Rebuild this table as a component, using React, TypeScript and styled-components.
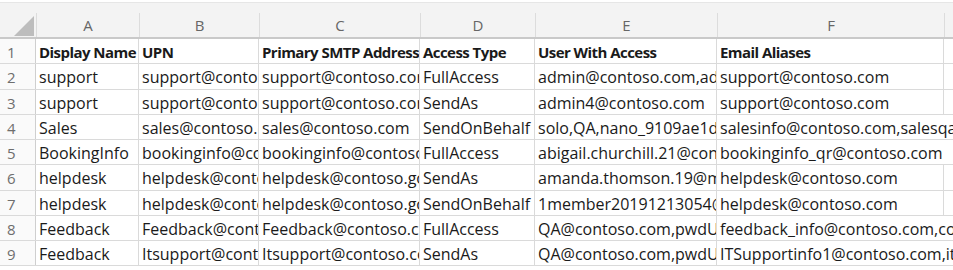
import React from "react";
import styled, { createGlobalStyle } from "styled-components";

const columns = ["A", "B", "C", "D", "E", "F", "G"];
const template = "36px 103px 120px 161px 115px 182px 227px 100px";

type Row = {
  cells: string[];
  spill?: boolean;
};

const rows: Row[] = [
  {
    cells: [
      "Display Name",
      "UPN",
      "Primary SMTP Address",
      "Access Type",
      "User With Access",
      "Email Aliases",
    ],
  },
  {
    cells: [
      "support",
      "support@contoso.com",
      "support@contoso.com",
      "FullAccess",
      "admin@contoso.com,admin2@contoso.com",
      "support@contoso.com",
    ],
  },
  {
    cells: [
      "support",
      "support@contoso.com",
      "support@contoso.com",
      "SendAs",
      "admin4@contoso.com",
      "support@contoso.com",
    ],
  },
  {
    cells: [
      "Sales",
      "sales@contoso.com",
      "sales@contoso.com",
      "SendOnBehalf",
      "solo,QA,nano_9109ae1d@contoso.com",
      "salesinfo@contoso.com,salesqa@contoso.com",
    ],
    spill: true,
  },
  {
    cells: [
      "BookingInfo",
      "bookinginfo@contoso.com",
      "bookinginfo@contoso.com",
      "FullAccess",
      "abigail.churchill.21@contoso.com",
      "bookinginfo_qr@contoso.com",
    ],
    spill: true,
  },
  {
    cells: [
      "helpdesk",
      "helpdesk@contoso.com",
      "helpdesk@contoso.gov",
      "SendAs",
      "amanda.thomson.19@mail.contoso.com",
      "helpdesk@contoso.com",
    ],
  },
  {
    cells: [
      "helpdesk",
      "helpdesk@contoso.com",
      "helpdesk@contoso.gov",
      "SendOnBehalf",
      "1member20191213054@contoso.com",
      "helpdesk@contoso.com",
    ],
  },
  {
    cells: [
      "Feedback",
      "Feedback@contoso.com",
      "Feedback@contoso.com",
      "FullAccess",
      "QA@contoso.com,pwdUser@contoso.com",
      "feedback_info@contoso.com,contact@contoso.com",
    ],
    spill: true,
  },
  {
    cells: [
      "Feedback",
      "Itsupport@contoso.com",
      "Itsupport@contoso.com",
      "SendAs",
      "QA@contoso.com,pwdUser@contoso.com",
      "ITSupportinfo1@contoso.com,itsupport2@contoso.com",
    ],
    spill: true,
  },
];

const GlobalStyle = createGlobalStyle`
  body {
    margin: 0;
    background: #ffffff;
    overflow: hidden;
  }
`;

const Sheet = styled.div`
  width: 953px;
  height: 270px;
  overflow: hidden;
  background: #ffffff;
  font-family: "Open Sans", "Noto Sans", sans-serif;
`;

const HeaderBar = styled.div`
  display: grid;
  grid-template-columns: ${template};
  height: 37px;
  box-sizing: border-box;
  margin-top: 2px;
  border-top: 1px solid #e6e6e6;
  border-bottom: 2px solid #c9c9c9;
  background: #f3f3f3;
`;

const Corner = styled.div`
  display: flex;
  align-items: flex-end;
  justify-content: flex-end;
  padding: 0 2px 1px 0;
`;

const SelectAll = styled.div`
  width: 20px;
  height: 20px;
  background: #bdbdbd;
  clip-path: polygon(100% 0, 100% 100%, 0 100%);
`;

const ColumnLetter = styled.div`
  display: flex;
  align-items: center;
  justify-content: center;
  margin-top: 10px;
  border-left: 1px solid #dcdcdc;
  color: #666666;
  font-size: 15px;
`;

const GridRow = styled.div`
  display: grid;
  grid-template-columns: ${template};
  height: 25.25px;
  box-sizing: border-box;
  border-bottom: 1px solid #dadada;
`;

const RowNumber = styled.div`
  display: flex;
  align-items: center;
  padding: 2px 0 0 7px;
  box-sizing: border-box;
  background: #fafafa;
  border-right: 1px solid #cfcfcf;
  color: #6e6e6e;
  font-size: 15px;
`;

const Cell = styled.div<{ $bold?: boolean; $spill?: boolean }>`
  display: flex;
  align-items: center;
  padding: 2px 0 0 3px;
  box-sizing: border-box;
  min-width: 0;
  overflow: hidden;
  white-space: nowrap;
  border-right: ${(p) => (p.$spill ? "none" : "1px solid #dadada")};
  grid-column: ${(p) => (p.$spill ? "span 2" : "auto")};
  color: #1a1a1a;
  font-size: ${(p) => (p.$bold ? "15px" : "16px")};
  font-weight: ${(p) => (p.$bold ? 700 : 400)};
  letter-spacing: ${(p) => (p.$bold ? "-0.55px" : "0")};
`;

const Filler = styled.div``;

export default function App() {
  return (
    <>
      <GlobalStyle />
      <Sheet>
        <HeaderBar>
          <Corner>
            <SelectAll />
          </Corner>
          {columns.map((c) => (
            <ColumnLetter key={c}>{c}</ColumnLetter>
          ))}
        </HeaderBar>
        {rows.map((row, i) => (
          <GridRow key={i}>
            <RowNumber>{i + 1}</RowNumber>
            {row.cells.map((text, j) => (
              <Cell
                key={j}
                $bold={i === 0}
                $spill={row.spill && j === row.cells.length - 1}
              >
                {text}
              </Cell>
            ))}
            {!row.spill && <Filler />}
          </GridRow>
        ))}
      </Sheet>
    </>
  );
}
